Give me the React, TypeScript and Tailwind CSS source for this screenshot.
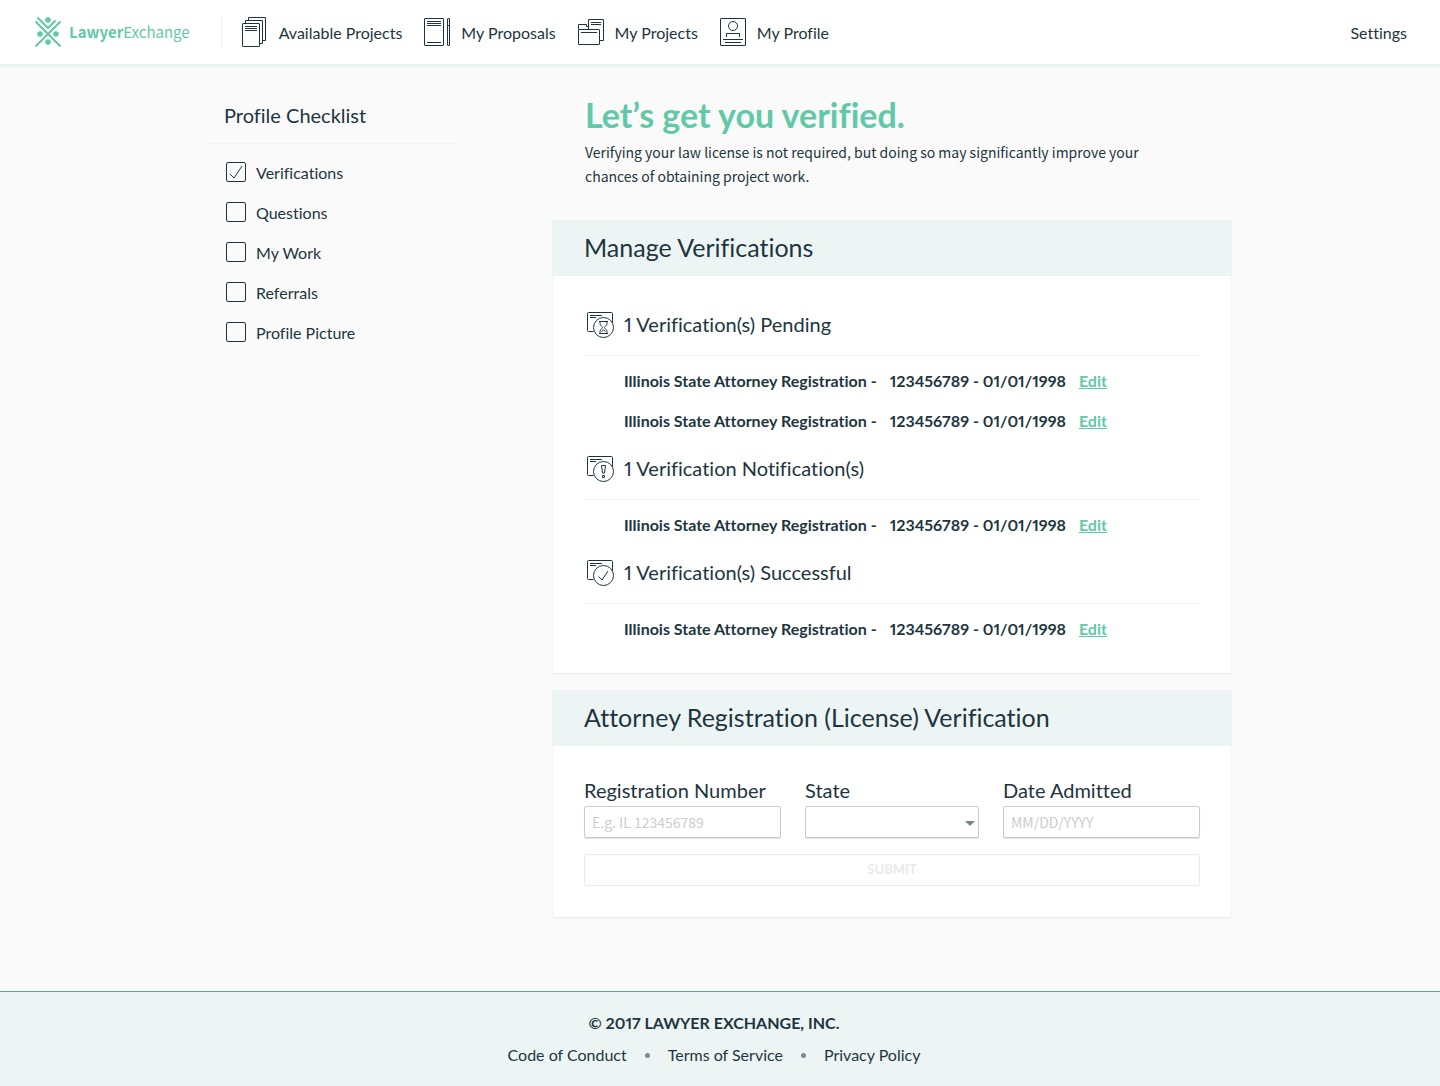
import type { ReactNode } from 'react'

const stroke = { fill: 'none', stroke: 'currentColor', strokeWidth: 1 }

function Logo() {
  return (
    <svg width="26" height="30" viewBox="0 0 26 30" fill="none" stroke="currentColor" strokeWidth="2" aria-hidden="true">
      <path d="M.5 4.5 25.5 29.5M25.5 4.5.5 29.5M2.5.5 13 11 20.5 3.5" />
      <g fill="currentColor" stroke="none">
        <circle cx="13" cy="3" r="2.8" />
        <circle cx="5" cy="17" r="2.8" />
        <circle cx="21" cy="17" r="2.8" />
        <circle cx="13" cy="25" r="2.8" />
      </g>
    </svg>
  )
}

function NavIcon({ children }: { children: ReactNode }) {
  return (
    <svg width="26" height="30" viewBox="0 0 26 30" {...stroke} className="shrink-0" aria-hidden="true">
      {children}
    </svg>
  )
}

const navItems = [
  {
    label: 'Available Projects',
    icon: (
      <>
        <rect x=".5" y="6.5" width="17" height="23" rx=".5" />
        <path d="M3.5 6.5v-3h17v23h-3M6.5 3.5v-3h17v23h-3M3 9.5h12M3 11.5h12M3 13.5h12" />
      </>
    ),
  },
  {
    label: 'My Proposals',
    icon: (
      <>
        <rect x=".5" y="1.5" width="19" height="27" rx=".5" />
        <rect x="23.5" y="1.5" width="2" height="27" rx=".5" />
        <path d="M3 4.5h14M3 6.5h14M3 8.5h14M3 25.5h14M23.5 8.5h2" />
      </>
    ),
  },
  {
    label: 'My Projects',
    icon: (
      <>
        <rect x=".5" y="12.5" width="21" height="15" rx=".5" />
        <path d="M.5 12.5v-5h8v2h2v3M10.5 12.5v-10h15v21h-4M13 5.5h10M13 7.5h10M3 15.5h16" />
      </>
    ),
  },
  {
    label: 'My Profile',
    icon: (
      <>
        <rect x=".5" y="1.5" width="25" height="27" rx=".5" />
        <circle cx="13" cy="9" r="4.5" />
        <path d="M6.5 20v-3.5h13V20M3 22.5h20M5 25.5h16" />
      </>
    ),
  },
]

function StatusIcon({ children }: { children: ReactNode }) {
  return (
    <svg width="28" height="28" viewBox="0 0 28 28" {...stroke} aria-hidden="true">
      <path d="M6.5 20.5h-5a1 1 0 0 1-1-1v-17a1 1 0 0 1 1-1h23a1 1 0 0 1 1 1V12M3 4.5h12M3 6.5h6" />
      <circle cx="16.5" cy="16.5" r="10" />
      {children}
    </svg>
  )
}

const groups = [
  {
    title: '1 Verification(s) Pending',
    rows: 2,
    icon: <path d="M12 10.5h9M12 22.5h9M13 10.5v2c0 2 2.5 3 2.5 4s-2.5 2-2.5 4v2M20 10.5v2c0 2-2.5 3-2.5 4s2.5 2 2.5 4v2M14.5 20.5l2-1.5 2 1.5" />,
  },
  {
    title: '1 Verification Notification(s)',
    rows: 1,
    icon: <path d="M14.5 10.5h4l-1 7.5h-2zM15.5 20.5h2v2h-2z" />,
  },
  {
    title: '1 Verification(s) Successful',
    rows: 1,
    icon: <path d="M11.5 17.5l3.5 3.5 6-9" />,
  },
]

const checklist = ['Verifications', 'Questions', 'My Work', 'Referrals', 'Profile Picture']

function Card({ title, children }: { title: string; children: ReactNode }) {
  return (
    <section>
      <h2 className="flex h-14 items-center bg-[#edf5f4] px-8 text-[25px]">{title}</h2>
      <div className="mx-px bg-white px-[31px] shadow-[0_1px_2px_rgba(0,0,0,0.08)]">{children}</div>
    </section>
  )
}

const field =
  "block h-8 w-full rounded-xs border border-[#c8cacb] bg-white px-[7px] font-['Noto_Sans_CJK_SC',sans-serif] text-sm shadow-[0_1px_1px_rgba(0,0,0,0.12)] placeholder:text-[#cbcdce]"

const fieldLabel = 'mb-0.5 block text-xl leading-7'

export default function App() {
  return (
    <div className="flex min-h-screen flex-col bg-[#fafafa] font-['Lato',sans-serif] text-base text-[#1d3540] proportional-nums [font-variant-ligatures:none]">
      <header className="flex h-16 items-center bg-white pr-[33px] pl-[35px] shadow-[0_1px_4px_#cfe9e1]">
        <a href="#" className="flex items-center gap-2 text-[#62c9a8]">
          <Logo />
          <span className="font-['Noto_Sans_CJK_SC',sans-serif] text-[15px]">
            <b>Lawyer</b>Exchange
          </span>
        </a>
        <nav className="ml-[31px] flex h-8 items-center gap-[22px] border-l border-[#edf5f4] pl-5">
          {navItems.map((item) => (
            <a key={item.label} href="#" className="flex items-center gap-[11px] whitespace-nowrap">
              <NavIcon>{item.icon}</NavIcon>
              <span className="pt-0.5">{item.label}</span>
            </a>
          ))}
        </nav>
        <a href="#" className="ml-auto pt-0.5">
          Settings
        </a>
      </header>

      <main className="mx-auto flex w-full max-w-5xl flex-1 items-start justify-between gap-8 pb-16">
        <aside className="w-[250px] pt-7">
          <h2 className="border-b border-[#edf5f4] px-4 pt-[9px] pb-[14px] text-xl leading-7">Profile Checklist</h2>
          <ul className="px-[18px] pt-2">
            {checklist.map((label, i) => (
              <li key={label}>
                <label className="flex h-10 items-center gap-[10px]">
                  <span className="relative size-5">
                    <input
                      type="checkbox"
                      defaultChecked={i === 0}
                      className="peer block size-5 appearance-none rounded-xs border border-[#1d3540]"
                    />
                    <svg viewBox="0 0 20 20" {...stroke} className="pointer-events-none absolute inset-0 hidden peer-checked:block" aria-hidden="true">
                      <path d="M4 12l4 4L16 4" />
                    </svg>
                  </span>
                  <span className="pt-0.5">{label}</span>
                </label>
              </li>
            ))}
          </ul>
        </aside>

        <div className="w-[680px]">
          <div className="px-[33px] pt-[29px] pb-8">
            <h1 className="mb-[3px] text-[34px] leading-[44px] font-bold text-[#62c9a8]">Let’s get you verified.</h1>
            <p className="max-w-[600px] font-['Noto_Sans_CJK_SC',sans-serif] text-sm leading-6">
              Verifying your law license is not required, but doing so may significantly improve your chances of obtaining project work.
            </p>
          </div>

          <Card title="Manage Verifications">
            <div className="flex flex-col gap-[14px] pt-[35px] pb-6">
              {groups.map((group) => (
                <div key={group.title}>
                  <h3 className="flex items-center gap-[9px] border-b border-[#f3f4f4] pb-4 pl-[3px] text-xl leading-6">
                    <StatusIcon>{group.icon}</StatusIcon>
                    <span className="pb-0.5">{group.title}</span>
                  </h3>
                  <ul className="pt-[5px] pl-10">
                    {Array.from({ length: group.rows }, (_, i) => (
                      <li key={i} className="flex h-10 items-center gap-[13px] font-bold">
                        <span>Illinois State Attorney Registration -</span>
                        <span>123456789 - 01/01/1998</span>
                        <a href="#" className="text-[#62c9a8] underline">
                          Edit
                        </a>
                      </li>
                    ))}
                  </ul>
                </div>
              ))}
            </div>
          </Card>

          <div className="h-[17px]" />

          <Card title="Attorney Registration (License) Verification">
            <form className="pt-[30px] pb-[31px]">
              <div className="grid grid-cols-[197fr_174fr_197fr] gap-6">
                <div>
                  <label htmlFor="number" className={fieldLabel}>
                    Registration Number
                  </label>
                  <input id="number" placeholder="E.g. IL 123456789" className={field} />
                </div>
                <div>
                  <label htmlFor="state" className={fieldLabel}>
                    State
                  </label>
                  <div className="relative">
                    <select id="state" className={`${field} appearance-none`} defaultValue="">
                      <option value=""></option>
                      <option value="IL">Illinois</option>
                    </select>
                    <svg width="10" height="5" viewBox="0 0 10 5" className="pointer-events-none absolute top-[15px] right-1 text-[#778891]" aria-hidden="true">
                      <path d="M0 0h10L5 5z" fill="currentColor" />
                    </svg>
                  </div>
                </div>
                <div>
                  <label htmlFor="date" className={fieldLabel}>
                    Date Admitted
                  </label>
                  <input id="date" placeholder="MM/DD/YYYY" className={field} />
                </div>
              </div>
              <button type="submit" disabled className="mt-4 block h-8 w-full rounded-xs border border-[#e9eaea] text-[13px] font-bold text-[#e9eaea]">
                SUBMIT
              </button>
            </form>
          </Card>
        </div>
      </main>

      <footer className="border-t border-[#52a78c] bg-[#edf5f4] py-[15px] pr-3 text-center">
        <p className="leading-8 font-bold">© 2017 LAWYER EXCHANGE, INC.</p>
        <nav className="flex h-8 items-center justify-center gap-[18px]">
          <a href="#">Code of Conduct</a>
          <span className="size-[5px] rounded-full bg-[#7d8b94]" />
          <a href="#">Terms of Service</a>
          <span className="size-[5px] rounded-full bg-[#7d8b94]" />
          <a href="#">Privacy Policy</a>
        </nav>
      </footer>
    </div>
  )
}
